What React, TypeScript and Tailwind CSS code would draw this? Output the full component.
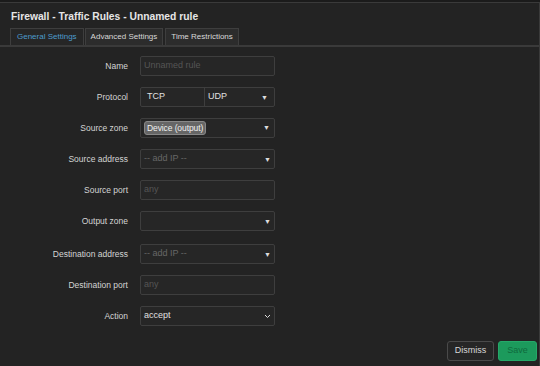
import React from 'react';

const Caret = () => <span className="text-[7px] text-[#ddd] leading-none">▼</span>;

const Row = ({ label, children }: { label: string; children: React.ReactNode }) => (
  <div className="flex items-center h-5">
    <div className="w-[128px] text-right text-[8.5px] text-[#d4d4d4]">{label}</div>
    <div className="ml-[12px] w-[135px] h-5">{children}</div>
  </div>
);

const Box = ({ children, className = '' }: { children?: React.ReactNode; className?: string }) => (
  <div
    className={
      'h-full w-full border border-[#3e3e3e] rounded-[2px] bg-[#262626] flex items-center px-[3px] text-[9px] ' +
      className
    }
  >
    {children}
  </div>
);

const App = () => {
  return (
    <div
      className="w-[540px] h-[366px] bg-[#232323] relative overflow-hidden"
      style={{ fontFamily: '"Liberation Sans", Arial, sans-serif' }}
    >
      <div className="h-[2px] bg-[#1b1b1b]" />
      <div className="border-t border-[#3a3a3a] border-r border-r-[#3a3a3a] h-full">
        {/* title */}
        <div className="pl-[11px] pt-[7px] text-[10.3px] font-bold text-[#e6e6e6] leading-[13px]">
          Firewall - Traffic Rules - Unnamed rule
        </div>

        {/* tabs */}
        <div className="mt-[7px] flex items-end pl-[10px] border-b-2 border-[#3a3a3a] h-[17px]">
          <div className="h-[17px] px-[6px] flex items-center border border-b-0 border-[#3e3e3e] bg-[#262626] text-[8px] text-[#4d9ccd]">
            General Settings
          </div>
          <div className="ml-[1px] h-[17px] px-[5px] flex items-center border border-b-0 border-[#3e3e3e] bg-[#2c2c2c] text-[8px] text-[#d8d8d8]">
            Advanced Settings
          </div>
          <div className="ml-[2px] h-[17px] px-[5px] flex items-center border border-b-0 border-[#3e3e3e] bg-[#2c2c2c] text-[8px] text-[#d8d8d8]">
            Time Restrictions
          </div>
        </div>

        {/* form */}
        <div className="mt-[9px] flex flex-col gap-[11px]">
          <Row label="Name">
            <Box>
              <span className="text-[#555]">Unnamed rule</span>
            </Box>
          </Row>
          <Row label="Protocol">
            <Box className="px-0">
              <div className="w-[61px] h-full flex items-center px-[3px] text-[#e0e0e0] border-r border-[#3e3e3e]">TCP</div>
              <div className="flex-1 h-full flex items-center justify-between px-[3px] text-[#e0e0e0]">
                <span>UDP</span>
                <Caret />
              </div>
            </Box>
          </Row>
          <Row label="Source zone">
            <Box className="justify-between px-[2px]">
              <span className="bg-[#666] border border-[#888] rounded-[3px] px-[2px] h-[14px] flex items-center text-[8.5px] text-[#f0f0f0] tracking-[-0.1px]">
                Device (output)
              </span>
              <span className="pr-[1px]">
                <Caret />
              </span>
            </Box>
          </Row>
          <Row label="Source address">
            <Box className="justify-between">
              <span className="text-[#666]">-- add IP --</span>
              <Caret />
            </Box>
          </Row>
          <Row label="Source port">
            <Box>
              <span className="text-[#555]">any</span>
            </Box>
          </Row>
          <Row label="Output zone">
            <Box className="justify-end">
              <Caret />
            </Box>
          </Row>
          <div className="h-[2px] -mt-[11px]" />
          <Row label="Destination address">
            <Box className="justify-between">
              <span className="text-[#666]">-- add IP --</span>
              <Caret />
            </Box>
          </Row>
          <Row label="Destination port">
            <Box>
              <span className="text-[#555]">any</span>
            </Box>
          </Row>
          <Row label="Action">
            <Box className="justify-between">
              <span className="text-[#e0e0e0]">accept</span>
              <svg width="7" height="5" viewBox="0 0 7 5" fill="none">
                <path d="M1 1l2.5 2.5L6 1" stroke="#ddd" strokeWidth="1" />
              </svg>
            </Box>
          </Row>
        </div>

        {/* buttons */}
        <div className="mt-[15px] flex justify-end gap-[4px] pr-[2px]">
          <button className="h-[20px] w-[47px] border border-[#4a4a4a] rounded-[3px] bg-[#262626] text-[9px] text-[#d8d8d8]">
            Dismiss
          </button>
          <button className="h-[20px] w-[39px] border border-[#25a869] rounded-[3px] bg-[#1c9a5c] text-[9px] text-[#0f6b3d]">
            Save
          </button>
        </div>
      </div>
    </div>
  );
};

export default App;
